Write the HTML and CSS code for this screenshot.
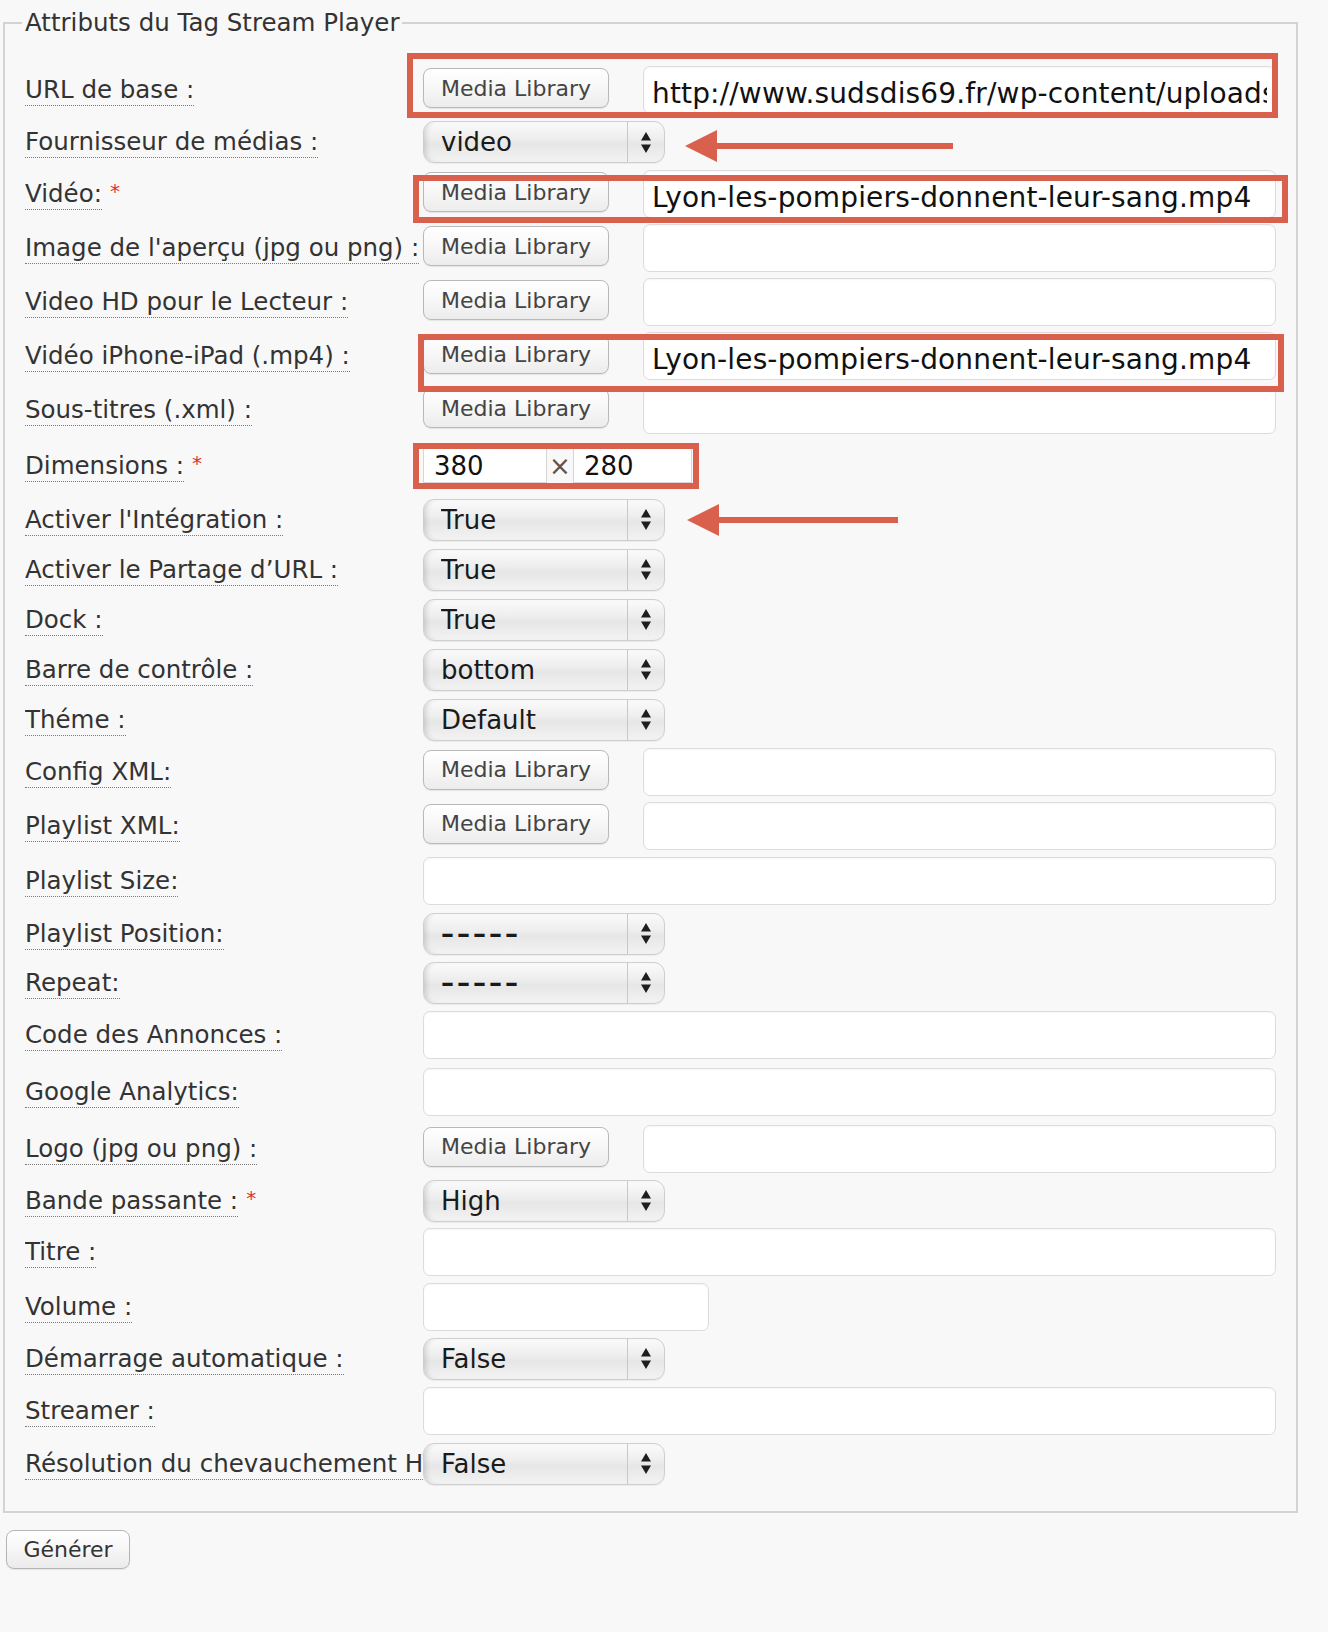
FILE: index.html
```html
<!DOCTYPE html>
<html lang="fr">
<head>
<meta charset="utf-8">
<title>Attributs du Tag Stream Player</title>
<link rel="stylesheet" href="styles.css">
</head>
<body>
<div class="page">
  <fieldset class="attrs">
    <legend>Attributs du Tag Stream Player</legend>
    <div class="form">
      <div class="row">
        <div class="lbl"><label>URL de base :</label></div>
        <div class="ctl"><button class="ml" type="button">Media Library</button><input class="txt" type="text" value="http://www.sudsdis69.fr/wp-content/uploads/2012/03/"></div>
      </div>
      <div class="row s">
        <div class="lbl"><label>Fournisseur de médias :</label></div>
        <div class="ctl"><div class="sel"><select><option>video</option></select><span class="arr"><svg width="10" height="21" viewBox="0 0 10 21"><path d="M5 0L10 8.5H0Z M0 12.5H10L5 21Z" fill="#1e1e1e"/></svg></span></div></div>
      </div>
      <div class="row">
        <div class="lbl"><label>Vidéo:</label><span class="req">*</span></div>
        <div class="ctl"><button class="ml" type="button">Media Library</button><input class="txt" type="text" value="Lyon-les-pompiers-donnent-leur-sang.mp4"></div>
      </div>
      <div class="row">
        <div class="lbl"><label>Image de l'aperçu (jpg ou png) :</label></div>
        <div class="ctl"><button class="ml" type="button">Media Library</button><input class="txt" type="text" value=""></div>
      </div>
      <div class="row">
        <div class="lbl"><label>Video HD pour le Lecteur :</label></div>
        <div class="ctl"><button class="ml" type="button">Media Library</button><input class="txt" type="text" value=""></div>
      </div>
      <div class="row">
        <div class="lbl"><label>Vidéo iPhone-iPad (.mp4) :</label></div>
        <div class="ctl"><button class="ml" type="button">Media Library</button><input class="txt" type="text" value="Lyon-les-pompiers-donnent-leur-sang.mp4"></div>
      </div>
      <div class="row">
        <div class="lbl"><label>Sous-titres (.xml) :</label></div>
        <div class="ctl"><button class="ml" type="button">Media Library</button><input class="txt" type="text" value=""></div>
      </div>
      <div class="row d">
        <div class="lbl"><label>Dimensions :</label><span class="req">*</span></div>
        <div class="ctl mid"><input class="dim" type="text" value="380"><span class="times">×</span><input class="dim dim2" type="text" value="280"></div>
      </div>
      <div class="row s">
        <div class="lbl"><label>Activer l'Intégration :</label></div>
        <div class="ctl"><div class="sel"><select><option>True</option></select><span class="arr"><svg width="10" height="21" viewBox="0 0 10 21"><path d="M5 0L10 8.5H0Z M0 12.5H10L5 21Z" fill="#1e1e1e"/></svg></span></div></div>
      </div>
      <div class="row s">
        <div class="lbl"><label>Activer le Partage d’URL :</label></div>
        <div class="ctl"><div class="sel"><select><option>True</option></select><span class="arr"><svg width="10" height="21" viewBox="0 0 10 21"><path d="M5 0L10 8.5H0Z M0 12.5H10L5 21Z" fill="#1e1e1e"/></svg></span></div></div>
      </div>
      <div class="row s">
        <div class="lbl"><label>Dock :</label></div>
        <div class="ctl"><div class="sel"><select><option>True</option></select><span class="arr"><svg width="10" height="21" viewBox="0 0 10 21"><path d="M5 0L10 8.5H0Z M0 12.5H10L5 21Z" fill="#1e1e1e"/></svg></span></div></div>
      </div>
      <div class="row s">
        <div class="lbl"><label>Barre de contrôle :</label></div>
        <div class="ctl"><div class="sel"><select><option>bottom</option></select><span class="arr"><svg width="10" height="21" viewBox="0 0 10 21"><path d="M5 0L10 8.5H0Z M0 12.5H10L5 21Z" fill="#1e1e1e"/></svg></span></div></div>
      </div>
      <div class="row s">
        <div class="lbl"><label>Théme :</label></div>
        <div class="ctl"><div class="sel"><select><option>Default</option></select><span class="arr"><svg width="10" height="21" viewBox="0 0 10 21"><path d="M5 0L10 8.5H0Z M0 12.5H10L5 21Z" fill="#1e1e1e"/></svg></span></div></div>
      </div>
      <div class="row">
        <div class="lbl"><label>Config XML:</label></div>
        <div class="ctl"><button class="ml" type="button">Media Library</button><input class="txt" type="text" value=""></div>
      </div>
      <div class="row">
        <div class="lbl"><label>Playlist XML:</label></div>
        <div class="ctl"><button class="ml" type="button">Media Library</button><input class="txt" type="text" value=""></div>
      </div>
      <div class="row h56">
        <div class="lbl"><label>Playlist Size:</label></div>
        <div class="ctl"><input class="txt" type="text" value=""></div>
      </div>
      <div class="row s">
        <div class="lbl"><label>Playlist Position:</label></div>
        <div class="ctl"><div class="sel"><select class="dash"><option>–––––</option></select><span class="arr"><svg width="10" height="21" viewBox="0 0 10 21"><path d="M5 0L10 8.5H0Z M0 12.5H10L5 21Z" fill="#1e1e1e"/></svg></span></div></div>
      </div>
      <div class="row s h48">
        <div class="lbl"><label>Repeat:</label></div>
        <div class="ctl"><div class="sel"><select class="dash"><option>–––––</option></select><span class="arr"><svg width="10" height="21" viewBox="0 0 10 21"><path d="M5 0L10 8.5H0Z M0 12.5H10L5 21Z" fill="#1e1e1e"/></svg></span></div></div>
      </div>
      <div class="row w">
        <div class="lbl"><label>Code des Annonces :</label></div>
        <div class="ctl"><input class="txt" type="text" value=""></div>
      </div>
      <div class="row w">
        <div class="lbl"><label>Google Analytics:</label></div>
        <div class="ctl"><input class="txt" type="text" value=""></div>
      </div>
      <div class="row h56">
        <div class="lbl"><label>Logo (jpg ou png) :</label></div>
        <div class="ctl"><button class="ml" type="button">Media Library</button><input class="txt" type="text" value=""></div>
      </div>
      <div class="row s h48">
        <div class="lbl"><label>Bande passante :</label><span class="req">*</span></div>
        <div class="ctl"><div class="sel"><select><option>High</option></select><span class="arr"><svg width="10" height="21" viewBox="0 0 10 21"><path d="M5 0L10 8.5H0Z M0 12.5H10L5 21Z" fill="#1e1e1e"/></svg></span></div></div>
      </div>
      <div class="row">
        <div class="lbl"><label>Titre :</label></div>
        <div class="ctl"><input class="txt" type="text" value=""></div>
      </div>
      <div class="row h56">
        <div class="lbl"><label>Volume :</label></div>
        <div class="ctl"><input class="txt short" type="text" value=""></div>
      </div>
      <div class="row s h48">
        <div class="lbl"><label>Démarrage automatique :</label></div>
        <div class="ctl"><div class="sel"><select><option>False</option></select><span class="arr"><svg width="10" height="21" viewBox="0 0 10 21"><path d="M5 0L10 8.5H0Z M0 12.5H10L5 21Z" fill="#1e1e1e"/></svg></span></div></div>
      </div>
      <div class="row h56">
        <div class="lbl"><label>Streamer :</label></div>
        <div class="ctl"><input class="txt" type="text" value=""></div>
      </div>
      <div class="row s">
        <div class="lbl"><label>Résolution du chevauchement HTML5 :</label></div>
        <div class="ctl"><div class="sel"><select><option>False</option></select><span class="arr"><svg width="10" height="21" viewBox="0 0 10 21"><path d="M5 0L10 8.5H0Z M0 12.5H10L5 21Z" fill="#1e1e1e"/></svg></span></div></div>
      </div>
    </div>
  </fieldset>
  <button class="gen" type="button">Générer</button>

  <div class="mark box1"></div>
  <div class="mark box2"></div>
  <div class="mark box3"></div>
  <div class="mark box4"></div>
  <svg class="arrow a1" width="272" height="36" viewBox="0 0 272 36"><path d="M2 18L34 2V34Z" fill="#d8604c"/><rect x="30" y="15" width="240" height="6" fill="#d8604c"/></svg>
  <svg class="arrow a2" width="215" height="36" viewBox="0 0 215 36"><path d="M2 18L34 2V34Z" fill="#d8604c"/><rect x="30" y="15" width="183" height="6" fill="#d8604c"/></svg>
</div>
</body>
</html>
```

FILE: styles.css
```css
* { box-sizing: border-box; }

html, body {
  margin: 0;
  padding: 0;
}

body {
  background: #f8f8f8;
  font-family: "DejaVu Sans", "Liberation Sans", sans-serif;
  color: #333;
}

.page {
  position: relative;
  width: 1328px;
  min-height: 1632px;
  padding: 9px 0 0 3px;
}

.attrs {
  width: 1295px;
  margin: 0;
  border: 2px solid #d3d3d3;
  padding: 26px 20px 22.5px 20px;
  min-width: 0;
}

.attrs legend {
  font-size: 24.5px;
  line-height: 28px;
  padding: 0 3px;
  margin-left: -3px;
  color: #333;
}

.form {
  display: flex;
  flex-direction: column;
}

.row {
  display: grid;
  grid-template-columns: 398px 853px;
  align-items: center;
  height: 54px;
}

.row.s { height: 50px; }
.row.w { height: 57px; }
.row.d { height: 57.5px; }
.row.h56 { height: 56px; }
.row.h48 { height: 48px; }

.lbl {
  white-space: nowrap;
  font-size: 24.5px;
  display: flex;
  align-items: flex-start;
  min-width: 0;
  padding-top: 2px;
}

.lbl label {
  display: block;
  max-width: 398px;
  overflow: hidden;
  line-height: 28px;
  padding-bottom: 1px;
  border-bottom: 1px dotted #7c7c7c;
  color: #333;
}

.req {
  color: #e0312a;
  font-size: 20px;
  line-height: 22px;
  margin-left: 8px;
}

.ctl {
  display: flex;
  align-items: flex-start;
}

.ctl.mid { align-items: center; }

.ml {
  flex: none;
  width: 186px;
  height: 40px;
  margin: 2px 34px 0 0;
  padding: 0;
  font-family: "DejaVu Sans", sans-serif;
  font-size: 22px;
  color: #444;
  border: 1px solid #b9b9b9;
  border-radius: 8px;
  background: linear-gradient(to bottom, #ffffff 0%, #f7f7f7 50%, #ececec 100%);
  box-shadow: 0 1px 1px rgba(0, 0, 0, 0.08);
}

.txt {
  flex: 1;
  min-width: 0;
  height: 48px;
  border: 1px solid #dcdcdc;
  border-radius: 7px;
  background: #fff;
  box-shadow: inset 0 1px 2px rgba(0, 0, 0, 0.04);
  font-family: "DejaVu Sans", sans-serif;
  font-size: 28px;
  letter-spacing: 0.15px;
  color: #111;
  padding: 6px 8px 0 8px;
  outline: none;
}

.txt.short {
  flex: none;
  width: 286px;
}

.sel {
  display: flex;
  width: 242px;
  height: 42px;
  border: 1px solid #cfcfcf;
  border-radius: 11px;
  overflow: hidden;
  background: linear-gradient(to bottom, #fbfbfb 0%, #eeeeee 40%, #e6e6e6 55%, #f3f3f3 100%);
  box-shadow: inset 5px 0 6px -4px rgba(0, 0, 0, 0.18), 0 1px 1px rgba(0, 0, 0, 0.06);
}

.sel select {
  -webkit-appearance: none;
  appearance: none;
  flex: 1;
  min-width: 0;
  height: 100%;
  border: 0;
  background: transparent;
  font-family: "DejaVu Sans", sans-serif;
  font-size: 26px;
  color: #1a1a1a;
  padding: 0 0 0 17px;
  outline: none;
}

.sel select.dash {
  letter-spacing: 3px;
  font-weight: bold;
}

.sel .arr {
  flex: none;
  width: 37px;
  border-left: 1px solid #c8c8c8;
  display: flex;
  align-items: center;
  justify-content: center;
}

.dim {
  width: 124px;
  height: 35px;
  border: 1px solid #d6d6d6;
  background: #fff;
  font-family: "DejaVu Sans", sans-serif;
  font-size: 26px;
  color: #111;
  padding: 0 0 0 10px;
  outline: none;
}

.dim2 { width: 119px; }

.times {
  width: 26px;
  text-align: center;
  font-size: 26px;
  color: #555;
}

.gen {
  display: block;
  margin: 17px 0 0 3px;
  width: 124px;
  height: 39px;
  padding: 0;
  font-family: "DejaVu Sans", sans-serif;
  font-size: 22px;
  color: #333;
  border: 1px solid #b5b5b5;
  border-radius: 8px;
  background: linear-gradient(to bottom, #ffffff 0%, #f6f6f6 50%, #ebebeb 100%);
  box-shadow: 0 1px 1px rgba(0, 0, 0, 0.08);
}

/* annotation overlays */
.mark {
  position: absolute;
  border: 6px solid #d8604c;
}

.box1 { left: 407px; top: 53px; width: 871px; height: 65px; }
.box2 { left: 413px; top: 175px; width: 875px; height: 48px; }
.box3 { left: 418px; top: 334px; width: 866px; height: 58px; }
.box4 { left: 413px; top: 443px; width: 286px; height: 46px; }

.arrow { position: absolute; }
.a1 { left: 683px; top: 128px; }
.a2 { left: 685px; top: 502px; }
```
